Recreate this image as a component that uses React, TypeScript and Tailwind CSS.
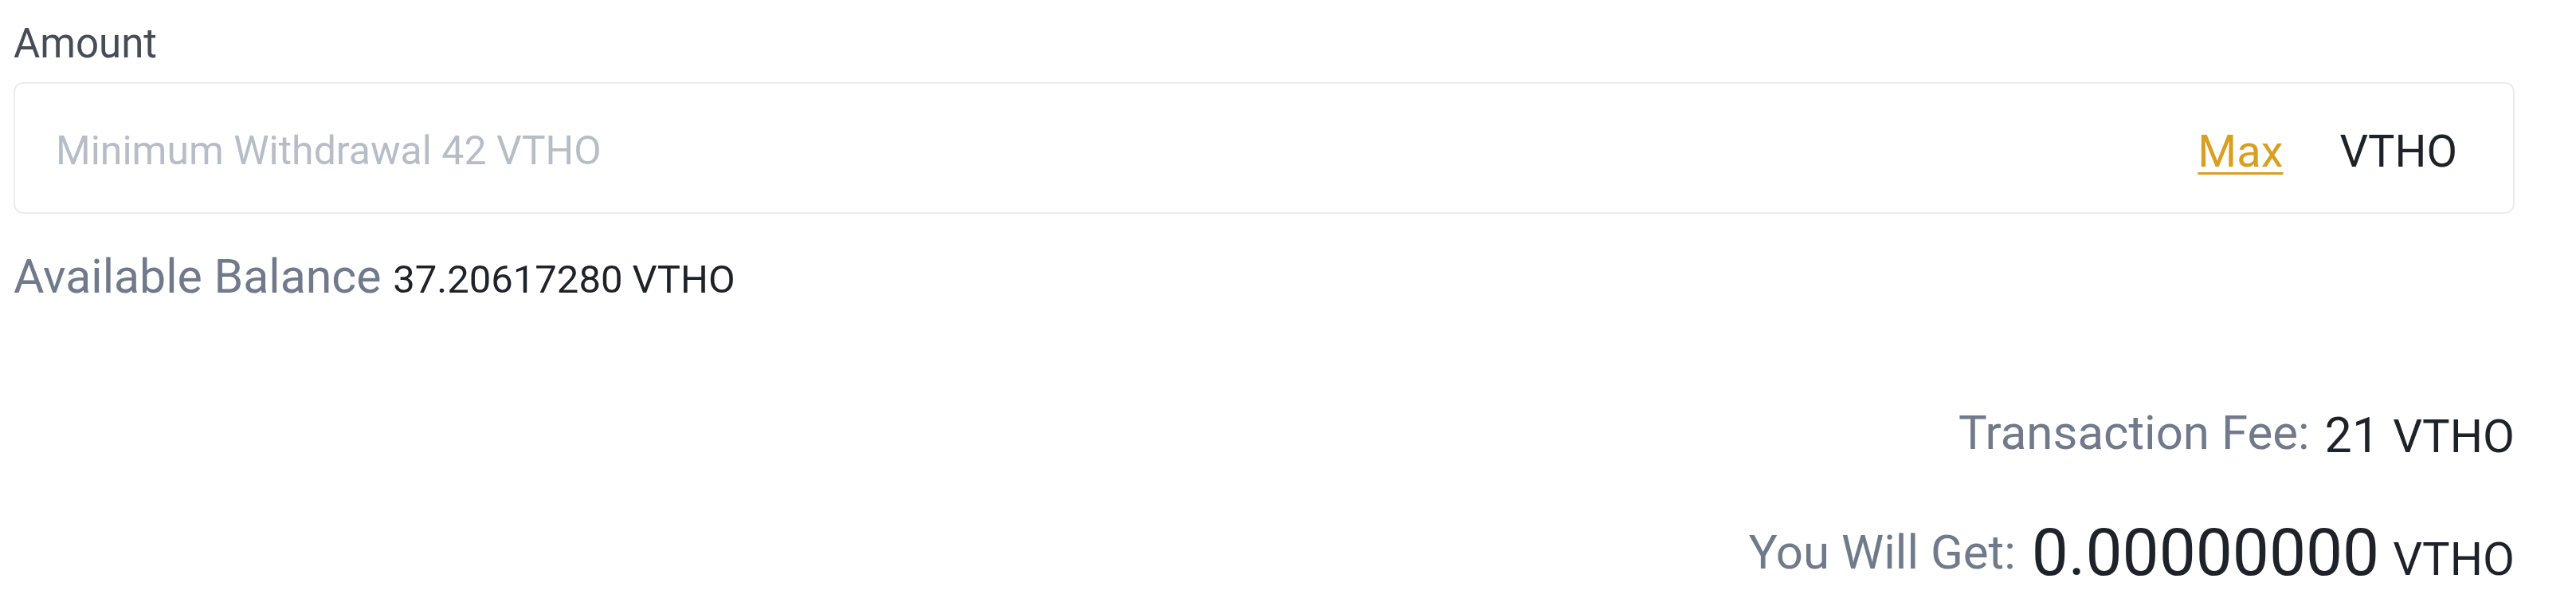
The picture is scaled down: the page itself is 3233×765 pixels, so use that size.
export default function App() {
  return (
    <div className="min-h-screen bg-white font-['Roboto',sans-serif]">
      <div className="pl-[17px] pr-[77px] pt-[25px]">
        {/* label */}
        <div className="text-[51px] leading-[60px] text-[#474d57]">Amount</div>

        {/* amount input */}
        <div className="mt-[18px] flex h-[165px] items-center rounded-[12px] border-2 border-[#eaecef] bg-white pl-[51px] pr-[70px] pt-2">
          <input
            className="min-w-0 flex-1 bg-transparent text-[50px] text-[#1e2329] outline-none placeholder:text-[#b7bdc6]"
            placeholder="Minimum Withdrawal 42 VTHO"
          />
          <div className="flex items-center gap-[71px] text-[56px] leading-none">
            <span className="text-[#d89f22] underline decoration-[3px] underline-offset-[7px]">Max</span>
            <span className="text-[#1e2329]">VTHO</span>
          </div>
        </div>

        {/* balance */}
        <div className="mt-[44px] text-[59px] leading-[70px] text-[#707a8a]">
          Available Balance <span className="text-[49px] text-[#1e2329]">37.20617280 VTHO</span>
        </div>

        {/* fee */}
        <div className="mt-[127px] flex items-center justify-end gap-[19px]">
          <span className="mb-[6px] text-[60px] leading-none text-[#707a8a]">Transaction Fee:</span>
          <div className="flex items-baseline gap-[17px] leading-none text-[#1e2329]">
            <span className="text-[61px]">21</span>
            <span className="text-[58px]">VTHO</span>
          </div>
        </div>

        {/* receive */}
        <div className="mt-[73px] flex items-center justify-end gap-[20px]">
          <span className="text-[60px] leading-none text-[#707a8a]">You Will Get:</span>
          <div className="flex items-baseline gap-[17px] leading-none text-[#1e2329]">
            <span className="text-[82px]">0.00000000</span>
            <span className="text-[58px]">VTHO</span>
          </div>
        </div>
      </div>
    </div>
  )
}
